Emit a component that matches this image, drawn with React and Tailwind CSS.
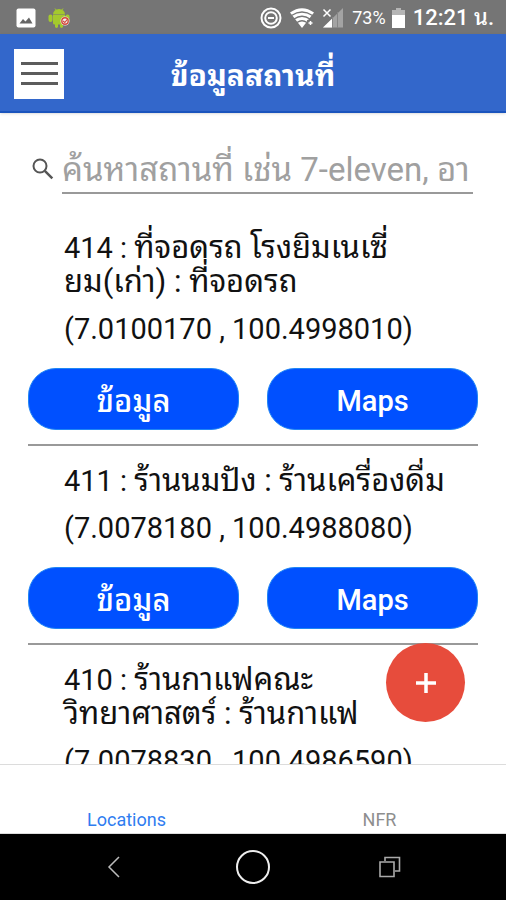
const places = [
  { id: 414, title: ["ที่จอดรถ โรงยิมเนเซี่", "ยม(เก่า) : ที่จอดรถ"], coords: "(7.0100170 , 100.4998010)" },
  { id: 411, title: ["ร้านนมปัง : ร้านเครื่องดื่ม"], coords: "(7.0078180 , 100.4988080)" },
  { id: 410, title: ["ร้านกาแฟคณะ", "วิทยาศาสตร์ : ร้านกาแฟ"], coords: "(7.0078830 , 100.4986590)" },
];

function StatusBar() {
  return (
    <div className="flex h-[34px] shrink-0 items-center bg-[#757575] pl-4 pr-3 pt-0.5 text-white">
      <svg className="size-5" viewBox="0 0 20 20" aria-hidden="true">
        <rect x="0.5" y="0.5" width="19" height="19" rx="2" fill="#fff" />
        <path d="M3.5 15.5 7 11l2.5 2.5L13 9.5l3.5 6z" fill="#666" />
      </svg>
      <svg className="ml-3 h-5 w-6" viewBox="0 0 24 20" aria-hidden="true">
        <g fill="#a4c92d">
          <path d="M5 6.500a6 5.500 0 0 1 12 0z" />
          <path d="M5 7h12v8q0 1.500-1.500 1.500h-9q-1.500 0-1.500-1.500z" />
          <rect x="0.500" y="6.500" width="4" height="7.500" rx="1.900" />
          <rect x="17.500" y="6.500" width="4" height="7.500" rx="1.900" />
          <rect x="7" y="14" width="3" height="6" rx="1.400" />
          <rect x="12" y="14" width="3" height="6" rx="1.400" />
        </g>
        <path d="m7 .5 1.500 2M15 .5l-1.500 2" stroke="#a4c92d" />
        <circle cx="17" cy="13" r="4.500" fill="#eee" />
        <circle cx="17" cy="13" r="3.200" fill="none" stroke="#d44a3c" strokeWidth="1.400" />
        <path d="m15 13 1.800 1.500L20 10.500" fill="none" stroke="#d44a3c" strokeWidth="1.200" />
      </svg>
      <svg className="ml-auto size-[22px]" viewBox="0 0 22 22" fill="none" stroke="#fff" strokeWidth="2" aria-hidden="true">
        <circle cx="11" cy="11" r="9.500" />
        <circle cx="11" cy="11" r="5.800" />
        <path d="M8 11h6" />
      </svg>
      <svg className="ml-2 h-5 w-6" viewBox="0 0 24 20" aria-hidden="true">
        <path d="M0 4.500Q12-4 24 4.500L12 20z" fill="#fff" />
        <path d="M1.500 7.500q10.500-7 21 0M4 11q8-5.500 16 0M7 14.500q5-3.500 10 0" fill="none" stroke="#757575" strokeWidth="1.300" />
        <path d="m17 12 6-1v8h-5z" fill="#757575" />
        <path d="M20.500 13v4M18.500 15h4" stroke="#fff" strokeWidth="1.500" />
      </svg>
      <svg className="ml-2 h-5 w-[22px]" viewBox="0 0 22 20" aria-hidden="true">
        <path d="M1 19.500 21 0v19.500z" fill="#a3a3a3" />
        <path d="M1 19.500 10 10.700v8.800z" fill="#fff" />
        <path d="M10.500 9v11M15.500 4v16" stroke="#858585" />
        <path d="m1.500 1.500 7 7m0-7-7 7" stroke="#fff" strokeWidth="1.500" />
      </svg>
      <span className="ml-2 text-[18px] leading-6">73%</span>
      <svg className="ml-1.5 h-5 w-[13px]" viewBox="0 0 13 20" aria-hidden="true">
        <path d="M4 0h5v2h4v18H0V2h4z" fill="#b5b5b5" />
        <path d="M0 7h13v13H0z" fill="#fff" />
      </svg>
      <span className="ml-2 whitespace-nowrap text-[22px] font-medium leading-6">12:21 น.</span>
    </div>
  );
}

function Place({ place }) {
  return (
    <li className="border-b-2 border-[#999] pt-[18px] pb-[14px]">
      <div className="pl-9 text-[29px] leading-[34px] text-[#111]">
        <h2>
          {place.title.map((line, index) => (
            <span key={line} className="block h-[34px] whitespace-nowrap">
              {index === 0 && `${place.id} : `}
              <span className="text-[31px]">{line}</span>
            </span>
          ))}
        </h2>
        <p className="mt-[13px] whitespace-nowrap">{place.coords}</p>
      </div>
      <div className="mt-[22px] grid grid-cols-2 gap-7 text-[29px] font-medium text-white">
        <button type="button" className="h-[62px] rounded-[28px] border border-[#1f86f5] bg-[#0050ff] pt-1.5 text-[31px]">ข้อมูล</button>
        <button type="button" className="h-[62px] rounded-[28px] border border-[#1f86f5] bg-[#0050ff] pt-1.5">Maps</button>
      </div>
    </li>
  );
}

export default function App() {
  return (
    <div className="flex h-screen flex-col overflow-hidden bg-white font-[Roboto,'Noto_Sans_Thai_Looped','Noto_Looped_Thai',Waree,Loma,Garuda,'Droid_Sans_Thai','Noto_Sans_Thai',sans-serif]">
      <StatusBar />
      <header className="z-10 grid h-[79px] shrink-0 grid-cols-[50px_1fr_50px] items-center border-b-2 border-[#1a54bd] bg-[#3367cb] px-3.5 pt-0.5 shadow-sm">
        <button type="button" aria-label="เมนู" className="flex size-[50px] flex-col items-center justify-center gap-[7px] bg-white">
          <span className="h-[3px] w-[37px] bg-[#5c5c5c]" />
          <span className="h-[3px] w-[37px] bg-[#5c5c5c]" />
          <span className="h-[3px] w-[37px] bg-[#5c5c5c]" />
        </button>
        <h1 className="pt-1 text-center text-[30px] font-bold leading-9 text-white">ข้อมูลสถานที่</h1>
      </header>
      <div className="relative min-h-0 flex-1">
        <main className="h-full overflow-y-auto px-7 pt-[31px] [scrollbar-width:none]">
          <label className="flex items-center pl-1 pr-[5px]">
            <svg className="size-[22px] shrink-0" viewBox="0 0 22 22" fill="none" stroke="#555" strokeWidth="2" aria-hidden="true">
              <circle cx="8" cy="8" r="6.500" />
              <path d="m12.800 12.800 7.500 7.500" strokeWidth="2.500" />
            </svg>
            <input
              type="text"
              aria-label="ค้นหาสถานที่"
              placeholder="ค้นหาสถานที่ เช่น 7-eleven, อา"
              className="ml-2 h-[50px] min-w-0 flex-1 border-b-2 border-[#999] pt-0.5 text-[33px] outline-none placeholder:text-[#a0a0a0]"
            />
          </label>
          <ul className="mt-[19px]">
            {places.map((place) => (
              <Place key={place.id} place={place} />
            ))}
          </ul>
        </main>
        <button
          type="button"
          aria-label="เพิ่มสถานที่"
          className="absolute bottom-[42px] right-[41px] flex size-[79px] items-center justify-center rounded-full bg-[#e74c3c]"
        >
          <svg className="size-5" viewBox="0 0 20 20" stroke="#fff" strokeWidth="3.500" aria-hidden="true">
            <path d="M10 0v20M0 10h20" />
          </svg>
        </button>
      </div>
      <nav className="grid h-[70px] shrink-0 grid-cols-2 items-end border-y border-[#dcdcdc] pb-px text-center text-[18px] leading-6">
        <a href="#locations" aria-current="page" className="text-[#2f7df0]">Locations</a>
        <a href="#nfr" className="text-[#8e8e8e]">NFR</a>
      </nav>
      <div className="grid h-[66px] shrink-0 grid-cols-[1fr_40px_1fr] items-center bg-black">
        <button type="button" aria-label="ย้อนกลับ" className="flex justify-center">
          <svg className="h-6 w-5" viewBox="0 0 20 24" fill="none" stroke="#bbb" strokeWidth="1.500">
            <path d="M12 2 2 12l10 10" />
          </svg>
        </button>
        <button type="button" aria-label="หน้าหลัก" className="flex justify-center">
          <svg className="size-9" viewBox="0 0 36 36" fill="none" stroke="#eee" strokeWidth="2">
            <circle cx="18" cy="18" r="16" />
          </svg>
        </button>
        <button type="button" aria-label="แอปล่าสุด" className="flex justify-center">
          <svg className="size-[22px]" viewBox="0 0 22 22" fill="none" stroke="#aaa" strokeWidth="1.600">
            <path d="M1 6h14v14.500H1z" />
            <path d="M6 5V1.500h14.500V15H16" />
          </svg>
        </button>
      </div>
    </div>
  );
}
